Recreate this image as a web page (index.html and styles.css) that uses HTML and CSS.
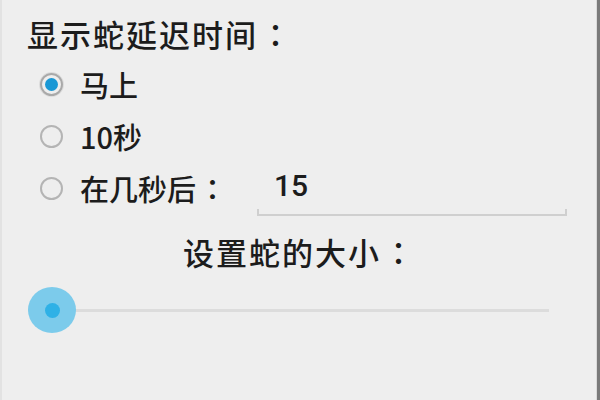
FILE: index.html
```html
<!DOCTYPE html>
<html lang="zh-CN">
<head>
<meta charset="utf-8">
<link rel="stylesheet" href="styles.css">
</head>
<body>
<div class="screen">
  <div class="title">显示蛇延迟时间<span class="colon">：</span></div>
  <div class="options">
    <div class="row">
      <span class="radio checked"><span class="dot"></span></span>
      <span class="label">马上</span>
    </div>
    <div class="row">
      <span class="radio"></span>
      <span class="label">10秒</span>
    </div>
    <div class="row">
      <span class="radio"></span>
      <span class="label">在几秒后<span class="colon">：</span></span>
      <div class="edit"><span class="edit-text">15</span></div>
    </div>
  </div>
  <div class="heading">设置蛇的大小<span class="colon">：</span></div>
  <div class="seek">
    <div class="track"></div>
    <div class="thumb"><span class="thumb-dot"></span></div>
  </div>
</div>
</body>
</html>
```
FILE: styles.css
```css
html, body {
  margin: 0;
  padding: 0;
  background: #eeeeee;
}
body {
  width: 600px;
  height: 400px;
  overflow: hidden;
  font-family: "Noto Sans CJK SC", "Noto Sans", sans-serif;
  color: #1c1c1c;
  text-spacing-trim: space-all;
}
.screen {
  box-sizing: border-box;
  width: 600px;
  height: 400px;
  border-left: 2px solid #e2e2e2;
  border-right: 3px solid #7a7a7a;
  box-shadow: inset -1px 0 0 #dadada;
  padding-top: 14px;
}
.colon {
  display: inline-block;
  width: 1em;
  text-align: center;
  font-family: "Noto Sans CJK JP", sans-serif;
  letter-spacing: 0;
  padding-left: 2px;
}
.title {
  height: 44px;
  line-height: 40px;
  font-size: 31px;
  font-weight: 500;
  padding-left: 25px;
  letter-spacing: 2px;
  white-space: nowrap;
}
.options {
  display: flex;
  flex-direction: column;
}
.row {
  height: 52px;
  display: flex;
  align-items: center;
  padding-left: 38px;
}
.radio {
  box-sizing: border-box;
  width: 23px;
  height: 23px;
  border-radius: 50%;
  border: 2px solid #b4b4b4;
  display: flex;
  align-items: center;
  justify-content: center;
  flex: none;
}
.radio.checked {
  border-color: #a9a9a9;
  box-shadow: 0 0 0 1px #dcdcdc;
}
.dot {
  width: 13px;
  height: 13px;
  border-radius: 50%;
  background: #1a98d5;
}
.label {
  font-size: 29px;
  font-weight: 500;
  line-height: 36px;
  margin-left: 17px;
  white-space: nowrap;
}
.edit {
  box-sizing: border-box;
  width: 310px;
  height: 44px;
  margin-left: 30px;
  margin-top: 12px;
  position: relative;
  border-bottom: 2px solid #cfcfcf;
  padding-left: 17px;
  display: flex;
  align-items: center;
  flex: none;
}
.edit::before, .edit::after {
  content: "";
  position: absolute;
  bottom: 0;
  width: 2px;
  height: 5px;
  background: #cfcfcf;
}
.edit::before { left: 0; }
.edit::after { right: 0; }
.edit-text {
  font-family: "Roboto", "Noto Sans", sans-serif;
  font-size: 30px;
  font-weight: 500;
  line-height: 36px;
  margin-top: -14px;
}
.heading {
  margin-top: 18px;
  height: 40px;
  line-height: 40px;
  font-size: 31px;
  font-weight: 500;
  text-align: center;
  letter-spacing: 2px;
  padding-right: 2px;
  white-space: nowrap;
}
.seek {
  position: relative;
  margin-top: 15px;
  margin-left: 26px;
  width: 521px;
  height: 46px;
  display: flex;
  align-items: center;
}
.track {
  width: 100%;
  height: 3px;
  background: #dcdcdc;
}
.thumb {
  position: absolute;
  left: 0;
  top: 0;
  width: 48px;
  height: 46px;
  border-radius: 50%;
  background: #7ccbeb;
  display: flex;
  align-items: center;
  justify-content: center;
}
.thumb-dot {
  width: 15px;
  height: 15px;
  border-radius: 50%;
  background: #2fb1e6;
}
```
